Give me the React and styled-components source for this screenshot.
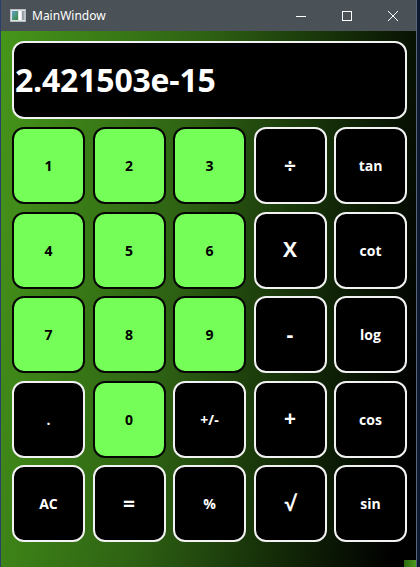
import React from 'react';
import styled, { createGlobalStyle } from 'styled-components';

const Global = createGlobalStyle`
  html, body { margin: 0; padding: 0; background: #0d1a31; }
  body { width: 420px; height: 567px; overflow: hidden; font-family: "Open Sans", "Noto Sans", sans-serif; }
  * { box-sizing: border-box; }
`;

const Desktop = styled.div`
  width: 420px;
  height: 567px;
  display: flex;
  background: #0d1a31;
`;

const Window = styled.div`
  width: 417px;
  height: 567px;
  display: flex;
  flex-direction: column;
  border-left: 1px solid #28406a;
  border-right: 1px solid #5a6677;
`;

const TitleBar = styled.div`
  height: 31px;
  flex: none;
  display: flex;
  align-items: center;
  background: #4a5157;
  color: #ffffff;
  font-family: "Noto Sans", "Open Sans", sans-serif;
  font-size: 12px;
`;

const AppIcon = styled.svg`
  margin-left: 9px;
  flex: none;
`;

const Title = styled.span`
  margin-left: 6px;
  flex: 1;
  padding-bottom: 1px;
`;

const Caption = styled.div`
  width: 46px;
  height: 31px;
  display: flex;
  align-items: center;
  justify-content: center;
`;

const Content = styled.div`
  flex: 1;
  display: flex;
  flex-direction: column;
  padding: 10px 0 0 11px;
  background: linear-gradient(98deg, #46961a 0%, #2e6213 42%, #0f2206 76%, #000000 95%);
`;

const Inner = styled.div`
  width: 395px;
  display: flex;
  flex-direction: column;
`;

const Display = styled.div`
  height: 78px;
  border: 2px solid #f2f2f2;
  border-radius: 12px;
  background: #000;
  color: #fff;
  display: flex;
  align-items: center;
  padding-left: 1px;
  padding-bottom: 1px;
  font-family: "Open Sans", "Noto Sans", sans-serif;
  font-weight: 700;
  font-size: 32px;
  letter-spacing: -0.2px;
`;

const Keys = styled.div`
  margin-top: 8px;
  display: grid;
  grid-template-columns: repeat(5, 1fr);
  grid-auto-rows: 77px;
  column-gap: 7.5px;
  row-gap: 7.5px;
`;

const Key = styled.div`
  border-radius: 12px;
  border: 2px solid ${p => (p.$green ? '#050505' : '#f2f2f2')};
  background: ${p => (p.$green ? '#76fe58' : '#000000')};
  color: ${p => (p.$green ? '#000000' : '#ffffff')};
  display: flex;
  align-items: center;
  justify-content: center;
  font-family: "Open Sans", "Noto Sans", sans-serif;
  font-weight: 700;
  font-size: ${p => (p.$big ? '21px' : '14px')};
  padding-bottom: ${p => (p.$big ? '2px' : '0')};
`;

const Footer = styled.div`
  margin-top: auto;
  display: flex;
  justify-content: flex-end;
`;

const Grip = styled.div`
  width: 12px;
  height: 7px;
  background: linear-gradient(to right, #2c6811, #4c9d1b);
`;

const keys = [
  ['1', 1], ['2', 1], ['3', 1], ['÷', 0, 1], ['tan', 0],
  ['4', 1], ['5', 1], ['6', 1], ['X', 0, 1], ['cot', 0],
  ['7', 1], ['8', 1], ['9', 1], ['-', 0, 1], ['log', 0],
  ['.', 0], ['0', 1], ['+/-', 0], ['+', 0, 1], ['cos', 0],
  ['AC', 0], ['=', 0, 1], ['%', 0], ['√', 0, 1], ['sin', 0],
];

export default function App() {
  return (
    <>
      <Global />
      <Desktop>
        <Window>
          <TitleBar>
            <AppIcon width="16" height="13" viewBox="0 0 16 13">
              <defs>
                <linearGradient id="ig" x1="0" y1="0" x2="1" y2="1">
                  <stop offset="0" stopColor="#5fa0c8" />
                  <stop offset="1" stopColor="#3a8a3a" />
                </linearGradient>
              </defs>
              <rect x="0.5" y="0.5" width="15" height="12" fill="#dfe3e6" stroke="#b8bec4" />
              <rect x="2" y="2" width="6" height="9" fill="url(#ig)" />
              <rect x="9" y="2" width="2" height="9" fill="#ffffff" />
              <rect x="12" y="2" width="2.5" height="9" fill="#9aa2a8" />
            </AppIcon>
            <Title>MainWindow</Title>
            <Caption>
              <svg width="10" height="10" viewBox="0 0 10 10"><path d="M0 5.5H10" stroke="#fff" strokeWidth="1" /></svg>
            </Caption>
            <Caption>
              <svg width="10" height="10" viewBox="0 0 10 10"><rect x="0.5" y="0.5" width="9" height="9" fill="none" stroke="#fff" strokeWidth="1" /></svg>
            </Caption>
            <Caption>
              <svg width="10" height="10" viewBox="0 0 10 10"><path d="M0 0L10 10M10 0L0 10" stroke="#fff" strokeWidth="1" /></svg>
            </Caption>
          </TitleBar>
          <Content>
            <Inner>
              <Display>2.421503e-15</Display>
              <Keys>
                {keys.map(([label, green, big], i) => (
                  <Key key={i} $green={!!green} $big={!!big}>{label}</Key>
                ))}
              </Keys>
            </Inner>
            <Footer>
              <Grip />
            </Footer>
          </Content>
        </Window>
      </Desktop>
    </>
  );
}
